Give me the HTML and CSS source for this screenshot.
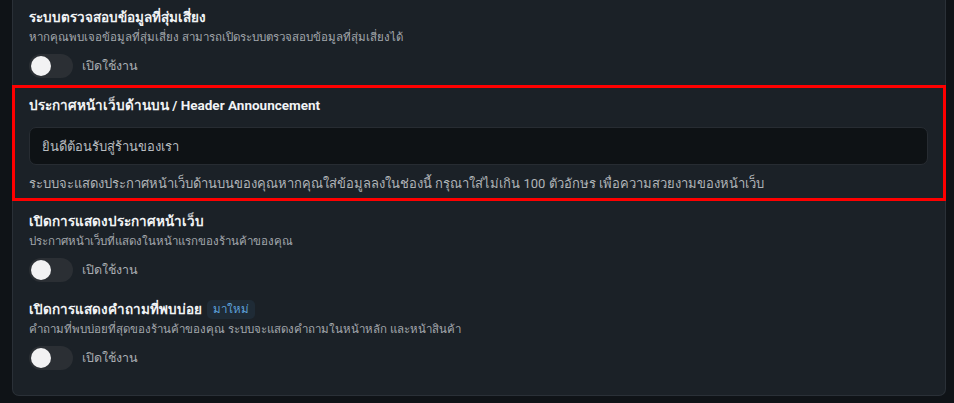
FILE: index.html
```html
<!DOCTYPE html>
<html lang="th">
<head>
    <meta charset="UTF-8">
    <title>ตั้งค่าร้านค้า</title>
    <link rel="stylesheet" href="styles.css">
</head>
<body>

<div class="panel">
    <div class="setting">
        <h3>ระบบตรวจสอบข้อมูลที่สุ่มเสี่ยง</h3>
        <p class="desc">หากคุณพบเจอข้อมูลที่สุ่มเสี่ยง สามารถเปิดระบบตรวจสอบข้อมูลที่สุ่มเสี่ยงได้</p>
        <label class="switch">
            <span class="track"><span class="knob"></span></span>
            <span class="switch-label">เปิดใช้งาน</span>
        </label>
    </div>

    <div class="setting announce">
        <h3>ประกาศหน้าเว็บด้านบน / Header Announcement</h3>
        <input type="text" class="field" value="ยินดีต้อนรับสู่ร้านของเรา">
        <p class="hint">ระบบจะแสดงประกาศหน้าเว็บด้านบนของคุณหากคุณใส่ข้อมูลลงในช่องนี้ กรุณาใส่ไม่เกิน 100 ตัวอักษร เพื่อความสวยงามของหน้าเว็บ</p>
    </div>

    <div class="setting">
        <h3>เปิดการแสดงประกาศหน้าเว็บ</h3>
        <p class="desc">ประกาศหน้าเว็บที่แสดงในหน้าแรกของร้านค้าของคุณ</p>
        <label class="switch">
            <span class="track"><span class="knob"></span></span>
            <span class="switch-label">เปิดใช้งาน</span>
        </label>
    </div>

    <div class="setting faq">
        <h3>เปิดการแสดงคำถามที่พบบ่อย <span class="badge">มาใหม่</span></h3>
        <p class="desc">คำถามที่พบบ่อยที่สุดของร้านค้าของคุณ ระบบจะแสดงคำถามในหน้าหลัก และหน้าสินค้า</p>
        <label class="switch">
            <span class="track"><span class="knob"></span></span>
            <span class="switch-label">เปิดใช้งาน</span>
        </label>
    </div>
</div>

</body>
</html>
```

FILE: styles.css
```css
body {
    background: #0f1317;
    color: #f1f3f5;
    font-family: Roboto, "Noto Sans", sans-serif;
    margin: 0;
    padding: 0 8px 0 12px;
}
.panel {
    background: #1b2127;
    border: 1px solid #2a3037;
    border-top: none;
    border-radius: 0 0 7px 7px;
    padding: 6px 0 25px;
}
.setting {
    padding: 0 16px;
}
h3 {
    font-size: 13.5px;
    font-weight: 700;
    margin: 0;
    line-height: 22px;
    display: flex;
    align-items: center;
}
.desc {
    color: #a3a8ad;
    font-size: 11.5px;
    line-height: 18px;
    margin: 0 0 8px;
}
.switch {
    display: flex;
    align-items: center;
    gap: 9px;
}
.track {
    background: #2b2f34;
    border-radius: 12px;
    height: 24px;
    width: 44px;
    display: flex;
    align-items: center;
    padding-left: 2px;
    box-sizing: border-box;
}
.knob {
    background: #f2f2f3;
    border-radius: 50%;
    height: 20px;
    width: 20px;
}
.switch-label {
    color: #a9adb2;
    font-size: 12.5px;
}
.announce {
    outline: 3px solid #ff0000;
    outline-offset: -3px;
    margin: 7px -1px 9px;
    padding: 9px 18px 7px 17px;
}
.field {
    background: #0e1215;
    border: 1px solid #272c32;
    border-radius: 7px;
    box-sizing: border-box;
    color: #b8bcc0;
    display: block;
    font-family: inherit;
    font-size: 13px;
    height: 38px;
    margin: 11px 0 9px;
    padding: 0 12px;
    width: 100%;
}
.hint {
    color: #b0b4b8;
    font-size: 13px;
    line-height: 20px;
    margin: 0;
}
.faq {
    margin-top: 16px;
}
.badge {
    background: #1f2b36;
    border-radius: 5px;
    color: #5ea2dd;
    font-size: 11.5px;
    font-weight: 400;
    margin-left: 5px;
    padding: 0 6px;
    line-height: 19px;
}
```
